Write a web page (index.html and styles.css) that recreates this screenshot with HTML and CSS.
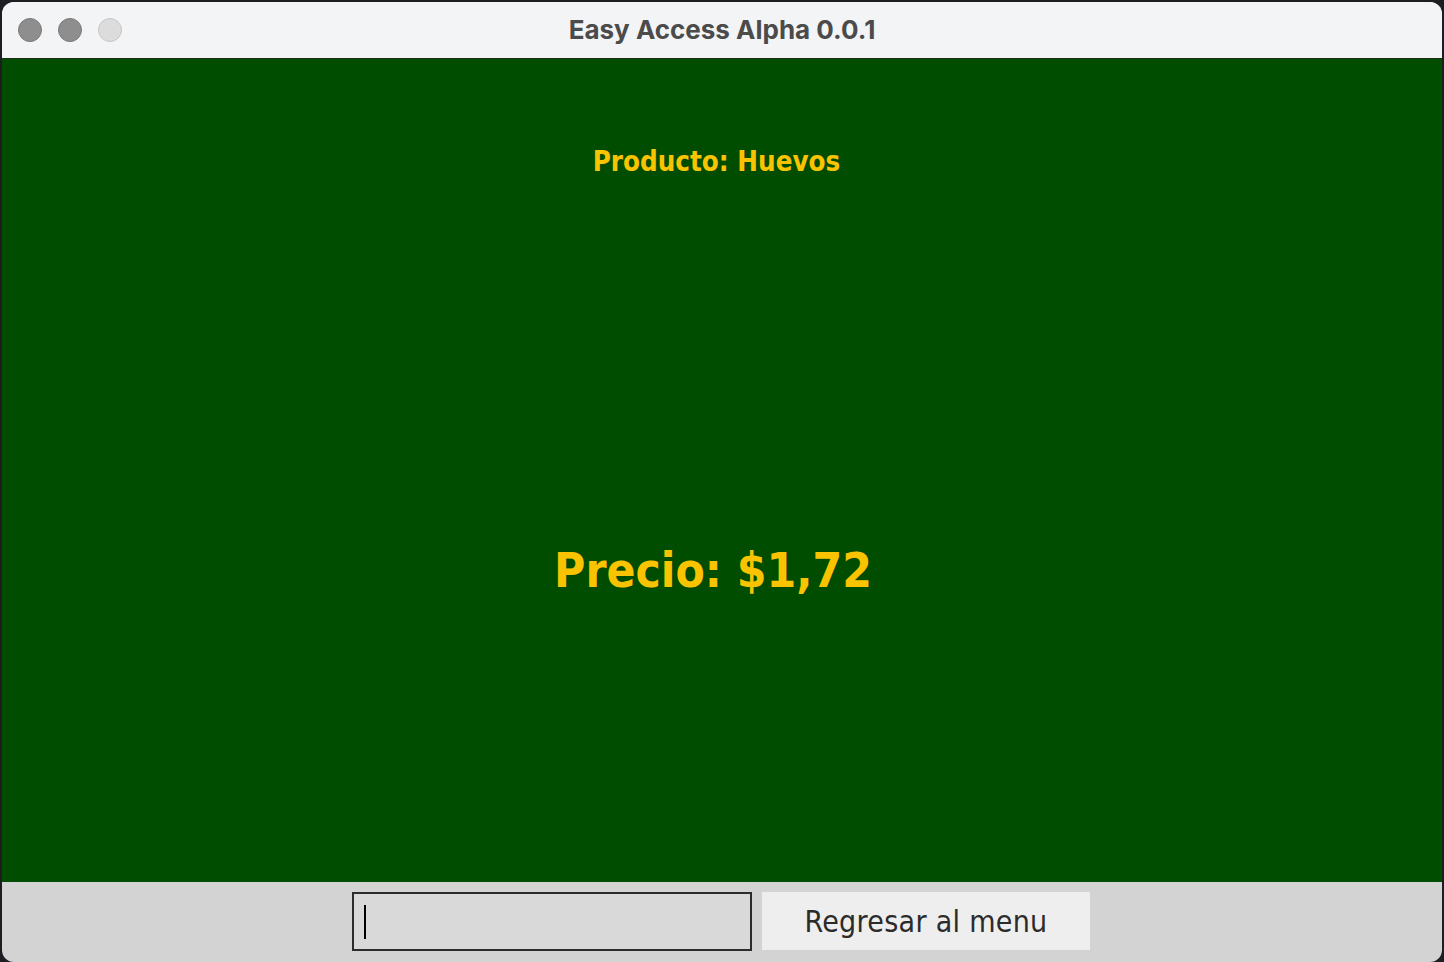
FILE: index.html
```html
<!DOCTYPE html>
<html lang="es">
<head>
<meta charset="utf-8">
<title>Easy Access Alpha 0.0.1</title>
<link rel="stylesheet" href="styles.css">
</head>
<body>
<div class="window">
  <header class="titlebar">
    <div class="lights">
      <span class="light"></span>
      <span class="light"></span>
      <span class="light light-off"></span>
    </div>
    <div class="title">Easy Access Alpha 0.0.1</div>
  </header>
  <main class="content">
    <div class="product">Producto: Huevos</div>
    <div class="price">Precio: $1,72</div>
  </main>
  <footer class="footer">
    <div class="field"><span class="caret"></span></div>
    <button class="btn">Regresar al menu</button>
  </footer>
</div>
</body>
</html>
```

FILE: styles.css
```css
html, body {
  margin: 0;
  padding: 0;
  background: #1c1e21;
  width: 1444px;
  height: 962px;
  overflow: hidden;
}

.window {
  margin: 2px 2px 0 2px;
  width: 1440px;
  height: 960px;
  border-radius: 12px;
  overflow: hidden;
  display: flex;
  flex-direction: column;
  background: #d3d3d3;
}

.titlebar {
  height: 56px;
  flex: none;
  background: #f3f4f6;
  border-bottom: 1px solid #1d2e1d;
  display: flex;
  align-items: center;
  position: relative;
}

.lights {
  display: flex;
  gap: 16px;
  padding-left: 16px;
}

.light {
  width: 22px;
  height: 22px;
  border-radius: 50%;
  background: #8e8e8e;
  border: 1px solid #7a7a7a;
}

.light-off {
  background: #dcdcdc;
  border-color: #c6c6c6;
}

.title {
  position: absolute;
  left: 0;
  right: 0;
  top: 0;
  height: 56px;
  line-height: 56px;
  text-align: center;
  font-family: Inter, "Liberation Sans", sans-serif;
  font-weight: 700;
  font-size: 26px;
  color: #4b4b4b;
  pointer-events: none;
}

.content {
  height: 823px;
  flex: none;
  background: #004d00;
  display: flex;
  flex-direction: column;
  align-items: center;
  color: #f9c300;
  font-family: "DejaVu Sans Condensed", "DejaVu Sans", sans-serif;
  font-stretch: condensed;
  font-weight: bold;
}

.product {
  margin-top: 87px;
  font-size: 27.5px;
  line-height: 30px;
  padding-right: 11px;
}

.price {
  margin-top: 367px;
  font-size: 47.5px;
  line-height: 56px;
  padding-right: 18px;
}

.footer {
  flex: 1;
  display: flex;
  justify-content: center;
  align-items: flex-start;
  gap: 10px;
  padding-top: 10px;
  padding-right: 2px;
}

.field {
  width: 386px;
  height: 55px;
  border: 2px solid #2c2c2c;
  background: #d9d9d9;
  display: flex;
  align-items: center;
  padding-left: 10px;
  box-sizing: content-box;
}

.caret {
  width: 2px;
  height: 34px;
  background: #000;
}

.btn {
  width: 328px;
  height: 58px;
  border: none;
  margin: 0;
  padding: 0;
  background: #eeeeee;
  color: #2b2b2b;
  font-family: "DejaVu Sans Condensed", "DejaVu Sans", sans-serif;
  font-stretch: condensed;
  font-size: 30px;
  font-weight: normal;
  letter-spacing: 0.3px;
}
```
